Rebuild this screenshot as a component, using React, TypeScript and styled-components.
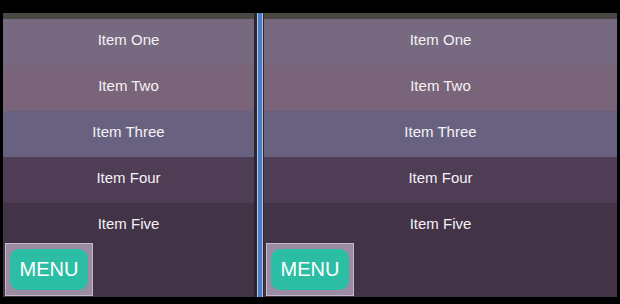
import { createGlobalStyle, styled } from 'styled-components';

const ITEMS = ['Item One', 'Item Two', 'Item Three', 'Item Four', 'Item Five'];
const ROW_COLORS = ['#77697f', '#7a6479', '#686180', '#4f3c55', '#423446'];

function MenuPanel({ width }: { width?: number }) {
  return (
    <StyledPanel $width={width}>
      {ITEMS.map((item, i) => (
        <StyledRow key={item} $bg={ROW_COLORS[i]} $last={i === ITEMS.length - 1}>
          {item}
        </StyledRow>
      ))}
      <StyledMenuBox>
        <StyledMenuButton>MENU</StyledMenuButton>
      </StyledMenuBox>
    </StyledPanel>
  );
}

function App() {
  return (
    <>
      <GlobalStyle />
      <StyledFrame>
        <MenuPanel width={251} />
        <StyledSplitter>
          <StyledSplitterBar />
        </StyledSplitter>
        <MenuPanel />
      </StyledFrame>
    </>
  );
}

export default App;

const GlobalStyle = createGlobalStyle`
  html, body {
    margin: 0;
    padding: 0;
    background: #000;
  }

  * {
    box-sizing: border-box;
  }
`;

const StyledFrame = styled.div`
  display: flex;

  width: 620px;
  height: 304px;
  padding: 13px 3px 7px 3px;

  background: #000;
  font-family: 'Liberation Sans', Arial, sans-serif;
`;

const StyledPanel = styled.div<{ $width?: number }>`
  position: relative;
  display: flex;
  flex-direction: column;

  ${({ $width }) => ($width ? `width: ${$width}px; flex: none;` : 'flex: 1;')}

  border-top: 6px solid #4a4843;
  background-color: #423446;
  box-shadow: inset -5px 0 6px rgba(0, 0, 0, 0.12);
`;

const StyledRow = styled.div<{ $bg: string; $last: boolean }>`
  height: 46px;
  ${({ $last }) => ($last ? 'flex: 1;' : 'flex: none;')}
  padding-top: 12px;

  background-color: ${({ $bg }) => $bg};

  color: #f4f2f5;
  font-size: 15px;
  line-height: 18px;
  text-align: center;
`;

const StyledSplitter = styled.div`
  flex: none;
  width: 10px;
  padding: 0 1px 0 3px;

  background: #2a2630;
`;

const StyledSplitterBar = styled.div`
  height: 100%;

  border-left: 1px solid #b9c6dc;
  border-right: 1px solid #b9c6dc;
  background: #4a7bc6;
`;

const StyledMenuBox = styled.div`
  position: absolute;
  left: 2px;
  bottom: 1px;

  width: 88px;
  height: 53px;
  padding: 5px 4px;

  border: 1px solid #c4b8ca;
  background: #9c8ca3;
`;

const StyledMenuButton = styled.button`
  width: 100%;
  height: 100%;
  padding: 0;

  border: none;
  border-radius: 9px;
  background: #2cbea4;

  color: #fff;
  font-family: 'Liberation Sans', Arial, sans-serif;
  font-size: 20px;
`;
